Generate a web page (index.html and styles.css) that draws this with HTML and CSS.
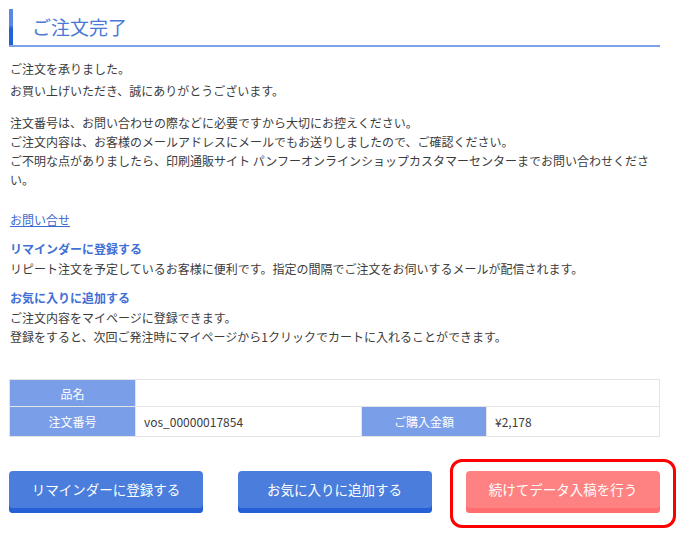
FILE: index.html
```html
<!DOCTYPE html>
<html lang="ja">
<head>
<meta charset="utf-8">
<title>ご注文完了</title>
<link rel="stylesheet" href="styles.css">
</head>
<body>
<div class="page">
  <h1 class="title">ご注文完了</h1>

  <div class="thanks">
    <p>ご注文を承りました。</p>
    <p>お買い上げいただき、誠にありがとうございます。</p>
  </div>

  <p class="notice">注文番号は、お問い合わせの際などに必要ですから大切にお控えください。<br>ご注文内容は、お客様のメールアドレスにメールでもお送りしましたので、ご確認ください。<br>ご不明な点がありましたら、印刷通販サイト パンフーオンラインショップカスタマーセンターまでお問い合わせください。</p>

  <p class="contact"><a href="#">お問い合せ</a></p>

  <div class="feature">
    <h2>リマインダーに登録する</h2>
    <p>リピート注文を予定しているお客様に便利です。指定の間隔でご注文をお伺いするメールが配信されます。</p>
  </div>

  <div class="feature">
    <h2>お気に入りに追加する</h2>
    <p>ご注文内容をマイページに登録できます。<br>登録をすると、次回ご発注時にマイページから1クリックでカートに入れることができます。</p>
  </div>

  <table class="order">
    <tr class="r1">
      <th>品名</th>
      <td colspan="3"></td>
    </tr>
    <tr class="r2">
      <th>注文番号</th>
      <td class="num">vos_00000017854</td>
      <th class="price-h">ご購入金額</th>
      <td>¥2,178</td>
    </tr>
  </table>

  <div class="actions">
    <a class="btn btn-blue" href="#">リマインダーに登録する</a>
    <a class="btn btn-blue" href="#">お気に入りに追加する</a>
    <a class="btn btn-pink highlight" href="#">続けてデータ入稿を行う</a>
  </div>
</div>
</body>
</html>
```

FILE: styles.css
```css
* { box-sizing: border-box; }

html, body {
  background: #fff;
}

body {
  margin: 0;
  font-family: "Noto Sans CJK JP", "Noto Sans", sans-serif;
  font-size: 12px;
  color: #3c3c3c;
}

.page {
  width: 651px;
  margin-left: 9px;
  padding-top: 9px;
  padding-bottom: 24px;
}

.title {
  margin: 0;
  height: 38px;
  padding-left: 23px;
  font-size: 19px;
  font-weight: normal;
  line-height: 36px;
  color: #4a78d8;
  background: linear-gradient(#5a88e4 0, #5a88e4 45%, #2460d8 55%, #2460d8 100%) no-repeat 0 0 / 4px 100%;
  border-bottom: 2px solid #7da2ea;
}

.thanks {
  margin-top: 11px;
  padding-left: 1px;
}
.thanks p {
  margin: 0;
  line-height: 22px;
}

.notice {
  margin: 11px 0 0;
  padding-left: 1px;
  line-height: 19px;
}

.contact {
  margin: 21px 0 0;
  padding-left: 1px;
  line-height: 19px;
}
.contact a {
  color: #3a6ad0;
  text-decoration: underline;
}

.feature {
  margin-top: 10px;
  padding-left: 1px;
}
.feature h2 {
  margin: 0;
  font-size: 12px;
  font-weight: bold;
  color: #3f70d6;
  line-height: 20px;
}
.feature p {
  margin: 0;
  line-height: 19px;
}

.order {
  width: 651px;
  margin-top: 33px;
  border-collapse: collapse;
  border: 1px solid #e4e4e4;
}
.order th,
.order td {
  border: 1px solid #e4e4e4;
  padding: 0 8px;
  text-align: left;
  font-weight: normal;
}
.order th {
  width: 126px;
  background: #7b9ee8;
  color: #fff;
  text-align: center;
}
.order .r1 { height: 27px; }
.order .r2 { height: 30px; }
.order .num { width: 226px; }
.order .price-h { width: 125px; }

.actions {
  margin-top: 34px;
  display: flex;
  justify-content: space-between;
}

.btn {
  display: block;
  width: 194px;
  height: 42px;
  border-radius: 4px;
  color: #fff;
  text-decoration: none;
  font-size: 13.5px;
  text-align: center;
  line-height: 36px;
}
.btn-blue {
  background: #4a7ddc;
  box-shadow: inset 0 -5px 0 #2760d6;
}
.btn-pink {
  background: #ff8282;
  box-shadow: inset 0 -5px 0 #ff6e6e;
}

.highlight {
  position: relative;
}
.highlight::after {
  content: "";
  position: absolute;
  top: -12px;
  bottom: -15px;
  left: -16px;
  right: -16px;
  border: 3px solid #f00;
  border-radius: 12px;
}
```
